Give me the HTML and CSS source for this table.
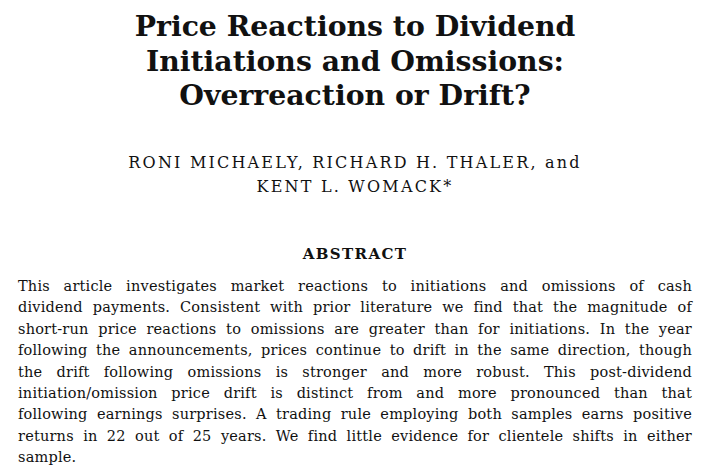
FILE: index.html
```html
<!DOCTYPE html>
<html lang="en">
<head>
<meta charset="utf-8">
<title>Price Reactions to Dividend Initiations and Omissions</title>
<link rel="stylesheet" href="styles.css">
</head>
<body>
<main class="page">
  <h1 class="title">
    <span class="tline">Price Reactions to Dividend</span>
    <span class="tline">Initiations and Omissions:</span>
    <span class="tline">Overreaction or Drift?</span>
  </h1>
  <p class="authors">
    <span class="aline">RONI MICHAELY, RICHARD H. THALER, and</span>
    <span class="aline">KENT L. WOMACK*</span>
  </p>
  <h2 class="abstract-head">ABSTRACT</h2>
  <p class="abstract">
    <span class="line">This article investigates market reactions to initiations and omissions of cash</span>
    <span class="line">dividend payments. Consistent with prior literature we find that the magnitude of</span>
    <span class="line">short-run price reactions to omissions are greater than for initiations. In the year</span>
    <span class="line">following the announcements, prices continue to drift in the same direction, though</span>
    <span class="line">the drift following omissions is stronger and more robust. This post-dividend</span>
    <span class="line">initiation/omission price drift is distinct from and more pronounced than that</span>
    <span class="line">following earnings surprises. A trading rule employing both samples earns positive</span>
    <span class="line">returns in 22 out of 25 years. We find little evidence for clientele shifts in either</span>
    <span class="line last">sample.</span>
  </p>
</main>
</body>
</html>
```
FILE: styles.css
```css
html, body {
  margin: 0;
  padding: 0;
  background: #ffffff;
}
body {
  font-family: "DejaVu Serif", "Liberation Serif", serif;
  color: #111111;
}
.page {
  width: 674px;
  padding: 9px 22px 0 18px;
  display: flex;
  flex-direction: column;
}
.title {
  margin: 0;
  font-size: 28.3px;
  font-weight: bold;
  line-height: 34.5px;
  text-align: center;
  display: flex;
  flex-direction: column;
}
.authors {
  margin: 38px 0 0 0;
  font-size: 16px;
  letter-spacing: 2.2px;
  line-height: 24px;
  text-align: center;
  display: flex;
  flex-direction: column;
}
.abstract-head {
  margin: 45px 0 0 0;
  font-size: 15px;
  letter-spacing: 1.4px;
  font-weight: bold;
  line-height: 20px;
  text-align: center;
}
.abstract {
  margin: 12.5px 0 0 0;
  font-size: 14.5px;
  letter-spacing: 0.2px;
  line-height: 21.4px;
  display: flex;
  flex-direction: column;
}
.line {
  display: block;
  text-align: justify;
  text-align-last: justify;
  white-space: nowrap;
}
.line.last {
  text-align-last: left;
}
```
